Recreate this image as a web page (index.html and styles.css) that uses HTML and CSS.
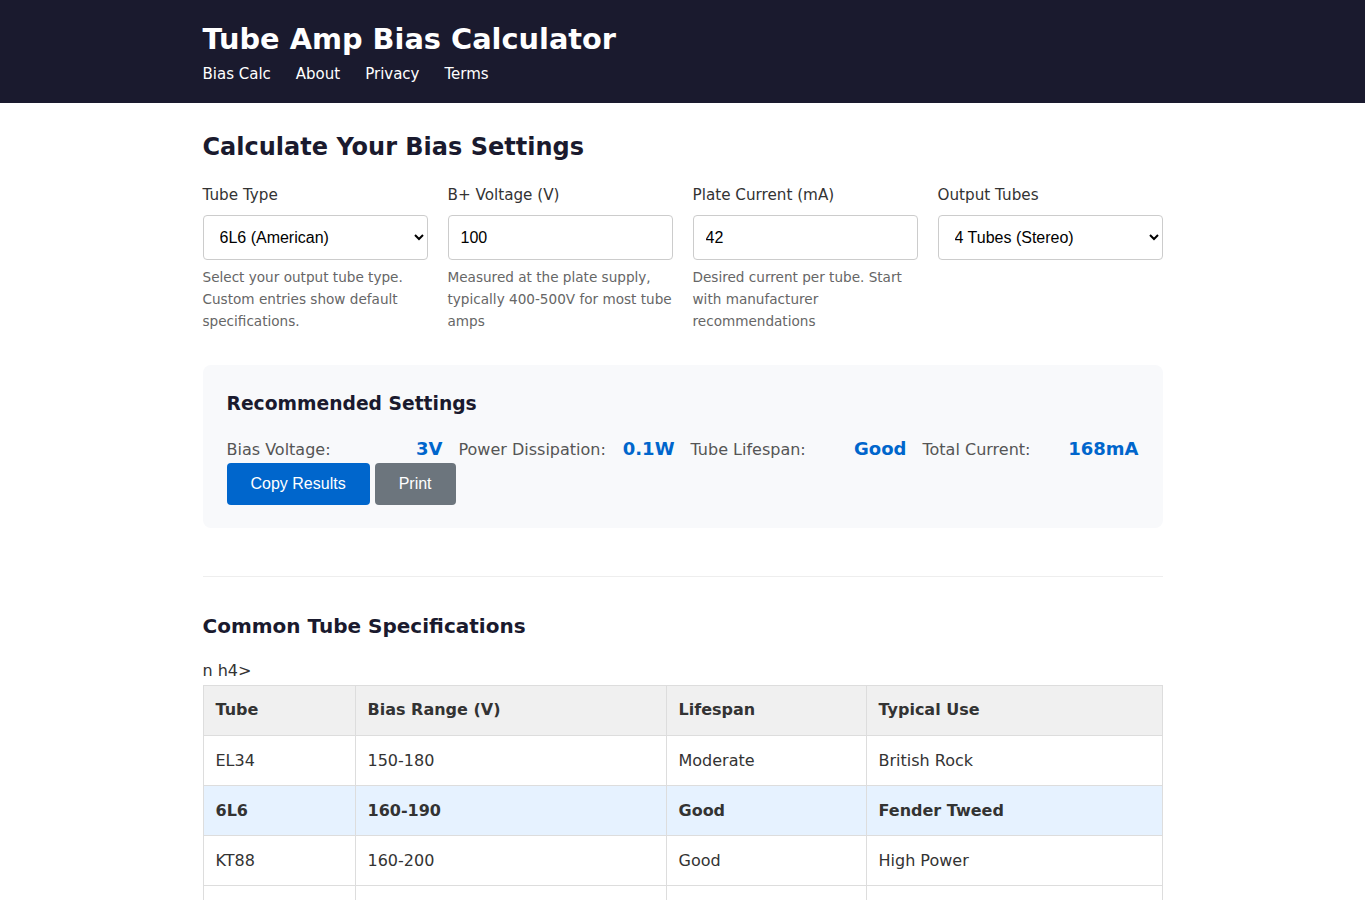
FILE: index.html
```html
<!DOCTYPE html>
<html lang="en">
<head>
    <meta charset="UTF-8">
    <meta name="viewport" content="width=device-width, initial-scale=1.0">
    <title>Tube Amp Bias Calculator</title>
    <link rel="stylesheet" href="styles.css">
</head>
<body>

<header class="site-header">
    <div class="container">
        <h1 class="site-title">Tube Amp Bias Calculator</h1>
        <nav class="site-nav">
            <a href="#">Bias Calc</a>
            <a href="#">About</a>
            <a href="#">Privacy</a>
            <a href="#">Terms</a>
        </nav>
    </div>
</header>

<main class="container main">
    <h2 class="page-title">Calculate Your Bias Settings</h2>

    <!-- input form -->
    <div class="form-grid">
        <div class="form-group">
            <label for="tubeType">Tube Type</label>
            <select id="tubeType">
                <option>6L6 (American)</option>
                <option>EL34</option>
                <option>KT88</option>
            </select>
            <p class="help">Select your output tube type. Custom entries show default specifications.</p>
        </div>
        <div class="form-group">
            <label for="voltage">B+ Voltage (V)</label>
            <input type="text" id="voltage" value="100">
            <p class="help">Measured at the plate supply, typically 400-500V for most tube amps</p>
        </div>
        <div class="form-group">
            <label for="current">Plate Current (mA)</label>
            <input type="text" id="current" value="42">
            <p class="help">Desired current per tube. Start with manufacturer recommendations</p>
        </div>
        <div class="form-group">
            <label for="outputTubes">Output Tubes</label>
            <select id="outputTubes">
                <option>4 Tubes (Stereo)</option>
                <option>2 Tubes</option>
            </select>
        </div>
    </div>

    <!-- results -->
    <div class="results">
        <h3>Recommended Settings</h3>
        <div class="result-grid">
            <div class="result-item"><span class="result-label">Bias Voltage:</span><span class="result-value">3V</span></div>
            <div class="result-item"><span class="result-label">Power Dissipation:</span><span class="result-value">0.1W</span></div>
            <div class="result-item"><span class="result-label">Tube Lifespan:</span><span class="result-value">Good</span></div>
            <div class="result-item"><span class="result-label">Total Current:</span><span class="result-value">168mA</span></div>
        </div>
        <div class="actions">
            <button class="btn btn-primary">Copy Results</button>
            <button class="btn btn-secondary">Print</button>
        </div>
    </div>

    <hr class="divider">

    <section class="specs">
        <h3>Common Tube Specifications</h3>
        <div class="stray">n h4&gt;</div>
        <table class="spec-table">
            <thead>
                <tr>
                    <th class="col-tube">Tube</th>
                    <th class="col-range">Bias Range (V)</th>
                    <th class="col-life">Lifespan</th>
                    <th class="col-use">Typical Use</th>
                </tr>
            </thead>
            <tbody>
                <tr><td>EL34</td><td>150-180</td><td>Moderate</td><td>British Rock</td></tr>
                <tr class="active"><td>6L6</td><td>160-190</td><td>Good</td><td>Fender Tweed</td></tr>
                <tr><td>KT88</td><td>160-200</td><td>Good</td><td>High Power</td></tr>
                <tr><td>6V6</td><td>140-170</td><td>Moderate</td><td>Small Combos</td></tr>
            </tbody>
        </table>
    </section>
</main>

</body>
</html>
```

FILE: styles.css
```css
body {
    margin: 0;
    font-family: "DejaVu Sans", sans-serif;
    color: #333;
    background: #fff;
}
.container {
    width: 960px;
    margin: 0 auto;
}
.site-header {
    background: #1a1a2e;
    color: #fff;
    padding: 21px 0 19px;
}
.site-title {
    margin: 0 0 7px;
    font-size: 28.8px;
    line-height: 36px;
}
.site-nav {
    display: flex;
    gap: 25px;
}
.site-nav a {
    color: #fff;
    text-decoration: none;
    font-size: 15px;
    line-height: 20px;
}
.main {
    padding: 30px 0 40px;
}
.page-title {
    margin: 0 0 24px;
    font-size: 24px;
    line-height: 28px;
    color: #1a1a2e;
}
.form-grid {
    display: grid;
    grid-template-columns: repeat(4, 1fr);
    gap: 20px;
    margin-bottom: 33px;
}
.form-group label {
    display: block;
    font-size: 15.2px;
    line-height: 21px;
    margin-bottom: 9px;
}
.form-group input,
.form-group select {
    box-sizing: border-box;
    width: 100%;
    height: 45px;
    padding: 12px;
    font-family: "Liberation Sans", Arial, sans-serif;
    font-size: 16px;
    color: #000;
    background: #fff;
    border: 1px solid #ccc;
    border-radius: 4px;
}
.help {
    margin: 6px 0 0;
    font-size: 13.6px;
    line-height: 22px;
    color: #666;
}
.results {
    background: #f8f9fb;
    border-radius: 8px;
    padding: 27px 24px 23px;
}
.results h3 {
    margin: 0 0 22px;
    font-size: 18.72px;
    line-height: 24px;
    color: #1a1a2e;
}
.result-grid {
    display: grid;
    grid-template-columns: repeat(4, 1fr);
    gap: 16px;
}
.result-item {
    display: flex;
    justify-content: space-between;
    align-items: baseline;
}
.result-label {
    font-size: 16px;
    color: #555;
}
.result-value {
    font-size: 18px;
    font-weight: bold;
    color: #0066cc;
}
.actions {
    display: flex;
    gap: 5px;
    margin-top: 4px;
}
.btn {
    font-family: "Liberation Sans", Arial, sans-serif;
    font-size: 16px;
    line-height: 18px;
    padding: 12px 24px;
    border: none;
    border-radius: 4px;
    color: #fff;
}
.btn-primary {
    background: #0066cc;
}
.btn-secondary {
    background: #6c757d;
}
.divider {
    border: none;
    border-top: 1px solid #eee;
    margin: 48px 0 38px;
}
.specs h3 {
    margin: 0 0 23px;
    font-size: 20px;
    line-height: 23px;
    color: #1a1a2e;
}
.stray {
    font-size: 16px;
    line-height: 19px;
    margin-bottom: 5px;
}
.spec-table {
    width: 100%;
    border-collapse: collapse;
    font-size: 16px;
}
.spec-table th,
.spec-table td {
    border: 1px solid #ddd;
    padding: 15px 12px;
    text-align: left;
    line-height: 19px;
}
.spec-table th {
    background: #f0f0f0;
    padding: 14px 12px 16px;
}
.col-tube { width: 127px; }
.col-range { width: 286px; }
.col-life { width: 175px; }
.spec-table tr.active {
    background: #e6f2ff;
    font-weight: bold;
}
```
